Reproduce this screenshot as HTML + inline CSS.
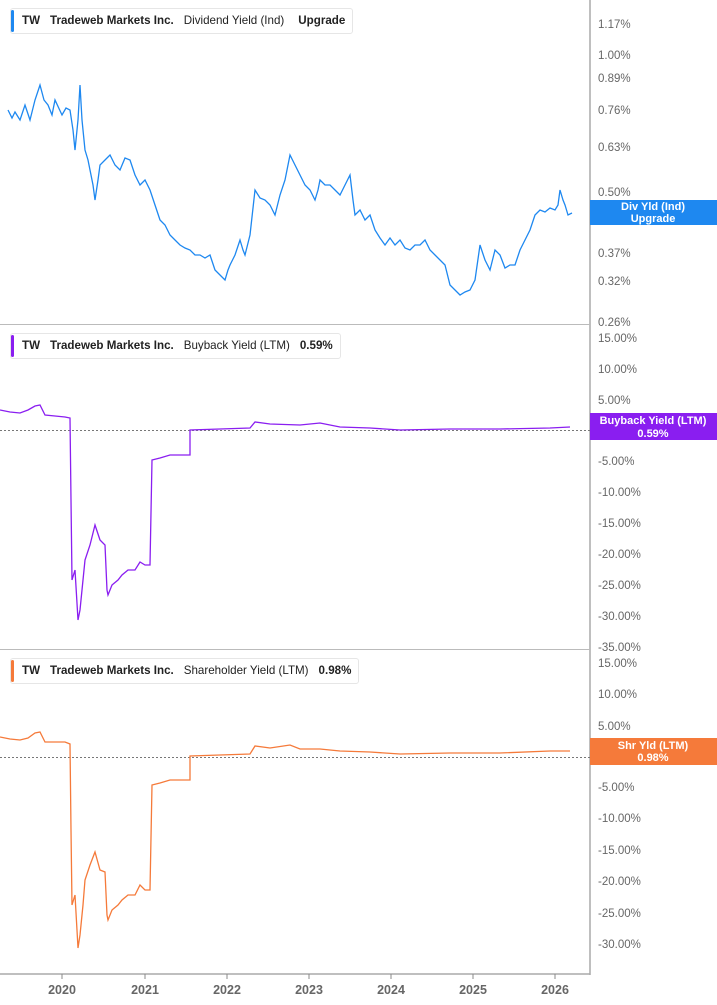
<!DOCTYPE html>
<html><head><meta charset="utf-8"><style>
body{margin:0;background:#fff;width:717px;height:1005px;overflow:hidden;font-family:"Liberation Sans",sans-serif}
svg{position:absolute;left:0;top:0}
.lab{position:absolute;background:#fff;border:1px solid #e6e6e6;border-radius:3px;font-size:11.6px;font-weight:bold;color:#222;height:24px;line-height:24px;padding:0 7px 0 11px;white-space:nowrap}
.lab:before{content:"";position:absolute;left:0;top:1px;bottom:1px;width:3px;border-radius:2px;background:var(--c)}
.lab span{margin-right:10px}
.lab .n{font-weight:normal}
</style></head><body>
<svg width="717" height="1005" font-family="Liberation Sans, sans-serif">
<g stroke="#aaa" stroke-width="1.5" fill="none">
<line x1="590" y1="0" x2="590" y2="975"/>
<line x1="0" y1="974" x2="590" y2="974"/>
</g>
<line x1="0" y1="324.5" x2="590" y2="324.5" stroke="#bbb"/>
<line x1="0" y1="649.5" x2="590" y2="649.5" stroke="#bbb"/>
<g stroke="#888"><line x1="62" y1="974" x2="62" y2="979"/><line x1="145" y1="974" x2="145" y2="979"/><line x1="227" y1="974" x2="227" y2="979"/><line x1="309" y1="974" x2="309" y2="979"/><line x1="391" y1="974" x2="391" y2="979"/><line x1="473" y1="974" x2="473" y2="979"/><line x1="555" y1="974" x2="555" y2="979"/></g>
<g font-size="12.5" font-weight="bold" fill="#666" text-anchor="middle">
<text x="62" y="994">2020</text><text x="145" y="994">2021</text><text x="227" y="994">2022</text><text x="309" y="994">2023</text><text x="391" y="994">2024</text><text x="473" y="994">2025</text><text x="555" y="994">2026</text></g>
<g font-size="11.5" fill="#666">
<text x="598" y="28">1.17%</text><text x="598" y="59">1.00%</text><text x="598" y="82">0.89%</text><text x="598" y="114">0.76%</text><text x="598" y="151">0.63%</text><text x="598" y="196">0.50%</text><text x="598" y="257">0.37%</text><text x="598" y="285">0.32%</text><text x="598" y="326">0.26%</text>
<text x="598" y="342">15.00%</text><text x="598" y="373">10.00%</text><text x="598" y="404">5.00%</text><text x="598" y="465">-5.00%</text><text x="598" y="496">-10.00%</text><text x="598" y="527">-15.00%</text><text x="598" y="558">-20.00%</text><text x="598" y="589">-25.00%</text><text x="598" y="620">-30.00%</text><text x="598" y="651">-35.00%</text>
<text x="598" y="667">15.00%</text><text x="598" y="698">10.00%</text><text x="598" y="730">5.00%</text><text x="598" y="791">-5.00%</text><text x="598" y="822">-10.00%</text><text x="598" y="854">-15.00%</text><text x="598" y="885">-20.00%</text><text x="598" y="917">-25.00%</text><text x="598" y="948">-30.00%</text>
</g>
<line x1="0" y1="430.5" x2="590" y2="430.5" stroke="#777" stroke-dasharray="2,2"/>
<line x1="0" y1="757.5" x2="590" y2="757.5" stroke="#777" stroke-dasharray="2,2"/>
<polyline fill="none" stroke="#1e88f0" stroke-width="1.3" points="8,110 12,118 15,112 20,120 25,105 30,120 35,100 40,85 44,100 48,105 52,115 55,100 62,115 66,108 70,110 73,130 75,150 78,120 80,85 82,120 85,150 88,160 90,170 93,185 95,200 98,180 100,165 105,160 110,155 115,165 120,170 125,158 130,160 135,175 140,185 145,180 150,190 155,205 160,220 165,225 170,235 175,240 180,245 185,248 190,250 195,255 200,255 205,258 210,255 215,270 220,275 225,280 228,270 230,265 235,255 240,240 243,250 245,255 250,235 255,190 260,198 265,200 270,205 275,215 280,195 285,180 290,155 295,165 300,175 305,185 310,190 315,200 318,190 320,180 325,185 330,185 335,190 340,195 345,185 350,175 353,200 355,215 360,210 365,220 370,215 375,230 380,238 385,245 390,238 395,245 400,240 405,248 410,250 415,245 420,245 425,240 430,250 435,255 440,260 445,265 450,285 455,290 460,295 465,292 470,290 475,280 480,245 485,260 490,270 495,250 500,255 505,268 510,265 515,265 520,250 525,240 530,230 535,215 540,210 545,212 550,208 555,210 558,205 560,190 563,200 565,205 568,215 572,213"/>
<polyline fill="none" stroke="#8a1ef0" stroke-width="1.3" points="0,410 10,412 20,413 28,410 35,406 40,405 45,415 55,416 65,417 70,418 71,500 72,580 75,570 78,620 80,610 83,580 85,560 90,545 95,525 100,540 105,545 107,590 108,595 112,585 118,580 122,575 128,570 135,570 140,562 145,565 150,565 152,460 160,458 170,455 180,455 190,455 190,430 220,429 250,428 255,422 270,424 300,425 320,423 340,427 370,428 400,430 450,429 500,429 550,428 570,427"/>
<polyline fill="none" stroke="#f57a3a" stroke-width="1.3" points="0,737 10,739 20,740 28,738 35,733 40,732 45,742 55,742 65,742 70,744 71,830 72,905 75,895 78,948 80,935 83,905 85,880 90,865 95,852 100,870 105,872 107,915 108,920 112,910 118,905 122,900 128,895 135,895 140,885 145,890 150,890 152,785 160,783 170,780 180,780 190,780 190,756 220,755 250,754 255,746 270,748 290,745 300,749 320,749 340,751 370,752 400,754 450,753 500,753 550,751 570,751"/>
<rect x="590" y="200" width="127" height="25" fill="#1e88f0"/>
<rect x="590" y="413" width="127" height="27" fill="#8a1ef0"/>
<rect x="590" y="738" width="127" height="27" fill="#f57a3a"/>
<g font-size="11" font-weight="bold" fill="#fff" text-anchor="middle">
<text x="653" y="210">Div Yld (Ind)</text><text x="653" y="222">Upgrade</text>
<text x="653" y="424">Buyback Yield (LTM)</text><text x="653" y="437">0.59%</text>
<text x="653" y="749">Shr Yld (LTM)</text><text x="653" y="761">0.98%</text>
</g>
</svg>
<div class="lab" style="--c:#1e88f0;left:10px;top:8px"><span>TW</span><span>Tradeweb Markets Inc.</span><span class="n">Dividend Yield (Ind)</span><b style="margin-left:4px">Upgrade</b></div>
<div class="lab" style="--c:#8a1ef0;left:10px;top:333px"><span>TW</span><span>Tradeweb Markets Inc.</span><span class="n">Buyback Yield (LTM)</span><b>0.59%</b></div>
<div class="lab" style="--c:#f57a3a;left:10px;top:658px"><span>TW</span><span>Tradeweb Markets Inc.</span><span class="n">Shareholder Yield (LTM)</span><b>0.98%</b></div>
</body></html>
